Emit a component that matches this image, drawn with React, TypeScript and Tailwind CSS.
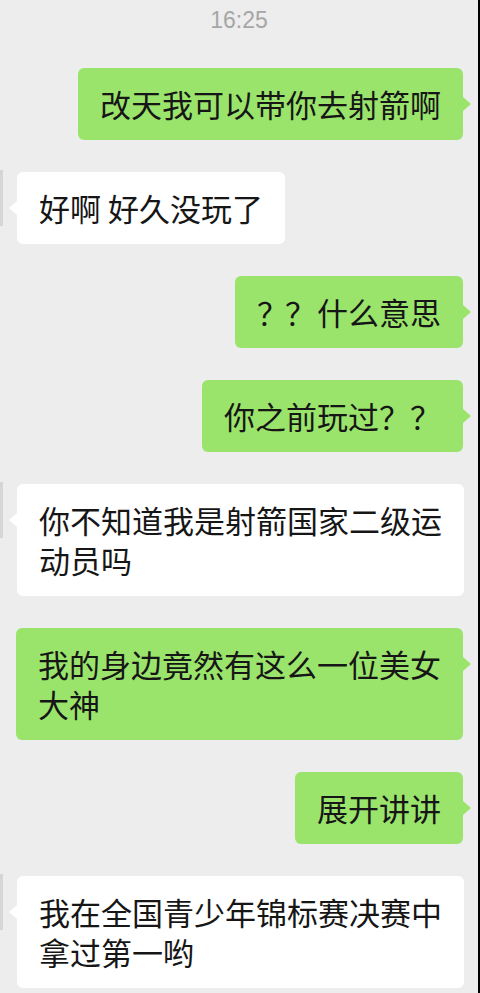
import React from "react";

type Message = {
  from: "me" | "her";
  lines: React.ReactNode[];
};

const messages: Message[] = [
  { from: "me", lines: ["改天我可以带你去射箭啊"] },
  { from: "her", lines: ["好啊 好久没玩了"] },
  {
    from: "me",
    lines: [
      <>
        <span className="tracking-[-3px]">？？ </span>什么意思
      </>,
    ],
  },
  { from: "me", lines: ["你之前玩过？？"] },
  { from: "her", lines: ["你不知道我是射箭国家二级运", "动员吗"] },
  { from: "me", lines: ["我的身边竟然有这么一位美女", "大神"] },
  { from: "me", lines: ["展开讲讲"] },
  { from: "her", lines: ["我在全国青少年锦标赛决赛中", "拿过第一哟"] },
];

function Bubble({ msg }: { msg: Message }) {
  const mine = msg.from === "me";

  return (
    <div className={`relative flex ${mine ? "justify-end pr-[15px]" : "justify-start pl-[17px]"}`}>
      {/* sliver of the cropped avatar at the left edge */}
      {!mine && <div className="absolute left-0 top-[-2px] h-[56px] w-[3px] bg-[#d6d6d6]" />}
      <div
        className={`relative rounded-[6px] px-[22px] py-[16px] text-[31px] leading-[40px] text-[#161616] ${
          mine ? "bg-[#9be46c]" : "bg-white"
        }`}
      >
        {msg.lines.map((line, i) => (
          <div key={i} className="whitespace-nowrap">
            {line}
          </div>
        ))}
        {mine ? (
          <span className="absolute right-[-8px] top-[29px] h-0 w-0 border-y-[7px] border-l-[8px] border-y-transparent border-l-[#9be46c]" />
        ) : (
          <span className="absolute left-[-8px] top-[29px] h-0 w-0 border-y-[7px] border-r-[8px] border-y-transparent border-r-white" />
        )}
      </div>
    </div>
  );
}

export default function App() {
  return (
    <div
      className="flex h-[993px] w-[480px] overflow-hidden bg-[#ededed]"
      style={{ fontFamily: '"Noto Sans CJK SC", "Noto Sans", sans-serif' }}
    >
      <div className="flex-1">
        <div className="pt-[4px] text-center text-[23px] leading-[28px] text-[#a6a6a6]">
          <span style={{ fontFamily: '"Liberation Sans", Arial, sans-serif' }}>16:25</span>
        </div>
        <div className="mt-[34px] flex flex-col gap-[32px]">
          {messages.map((m, i) => (
            <Bubble key={i} msg={m} />
          ))}
        </div>
      </div>
      <div className="w-[2px] bg-black" />
    </div>
  );
}
